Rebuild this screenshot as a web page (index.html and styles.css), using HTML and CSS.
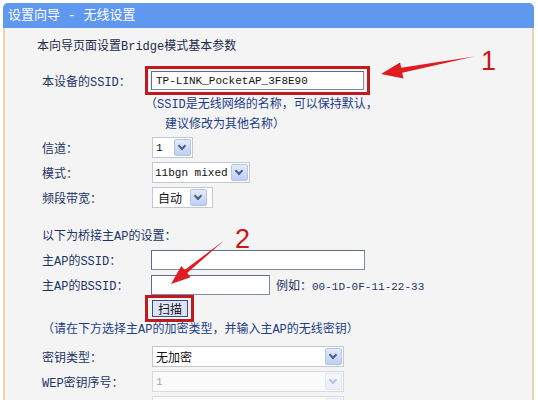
FILE: index.html
```html
<!DOCTYPE html>
<html lang="zh-CN">
<head>
<meta charset="utf-8">
<title>设置向导 - 无线设置</title>
<link rel="stylesheet" href="styles.css">
</head>
<body>
<div class="panel">
  <div class="header">设置向导 - 无线设置</div>
  <div class="content">
    <div class="intro">本向导页面设置Bridge模式基本参数</div>

    <div class="row row-ssid">
      <div class="label">本设备的SSID：</div>
      <div class="redbox redbox-input">
        <div class="input input-ssid"><span class="en">TP-LINK_PocketAP_3F8E90</span></div>
      </div>
    </div>
    <div class="hint">
      <div class="hint-line">（SSID是无线网络的名称，可以保持默认，</div>
      <div class="hint-line hint-indent">建议修改为其他名称）</div>
    </div>

    <div class="row">
      <div class="label">信道：</div>
      <div class="select w-channel"><span class="select-text en">1</span><span class="select-btn"></span></div>
    </div>
    <div class="row">
      <div class="label">模式：</div>
      <div class="select w-mode"><span class="select-text en">11bgn mixed</span><span class="select-btn"></span></div>
    </div>
    <div class="row">
      <div class="label">频段带宽：</div>
      <div class="select w-band"><span class="select-text">自动</span><span class="select-btn"></span></div>
    </div>

    <div class="row section">
      <div class="label label-wide">以下为桥接主AP的设置：</div>
    </div>
    <div class="row">
      <div class="label">主AP的SSID：</div>
      <div class="input input-master"></div>
    </div>
    <div class="row">
      <div class="label">主AP的BSSID：</div>
      <div class="input input-bssid"></div>
      <div class="example">例如：<span class="en">00-1D-0F-11-22-33</span></div>
    </div>
    <div class="row row-scan">
      <div class="label"></div>
      <div class="redbox redbox-btn"><span class="button">扫描</span></div>
    </div>
    <div class="hint2">（请在下方选择主AP的加密类型，并输入主AP的无线密钥）</div>

    <div class="row row-key">
      <div class="label">密钥类型：</div>
      <div class="select w-key"><span class="select-text">无加密</span><span class="select-btn"></span></div>
    </div>
    <div class="row">
      <div class="label">WEP密钥序号：</div>
      <div class="select w-key disabled"><span class="select-text en">1</span><span class="select-btn"></span></div>
    </div>
    <div class="row">
      <div class="label"></div>
      <div class="select w-key disabled"><span class="select-text"></span><span class="select-btn"></span></div>
    </div>
  </div>
</div>

<svg class="annot" width="538" height="400" viewBox="0 0 538 400">
  <polygon class="arrow" points="381,74 400,62.5 401.2,67.8 474,56.5 402.2,72.8 403.5,78.5"/>
  <text class="num" x="481" y="70">1</text>
  <polygon class="arrow" points="171,284 181.3,266 184.6,270.1 224,240.5 187.2,273.1 190.6,277.3"/>
  <text class="num" x="235" y="248">2</text>
</svg>
</body>
</html>
```

FILE: styles.css
```css
html, body {
  margin: 0;
  padding: 0;
  background: #ffffff;
}

body {
  width: 538px;
  height: 400px;
  overflow: hidden;
  position: relative;
  font-family: "Liberation Mono", "Noto Sans CJK SC", monospace;
  font-size: 12px;
  color: #1b3466;
}

.panel {
  margin: 3px 4px 0 3px;
  width: 531px;
}

.header {
  height: 25px;
  line-height: 25px;
  background: #6097ef;
  border-radius: 5px 5px 0 0;
  color: #ffffff;
  font-size: 13px;
  padding-left: 5px;
}

.content {
  background: #f4f4f4;
  border-left: 2px solid #ecd3ab;
  border-right: 2px solid #ecd3ab;
  padding-left: 37px;
  height: 380px;
}

.en {
  font-family: "Liberation Mono", monospace;
  font-size: 11px;
}

.intro {
  margin: 0 0 0 -5px;
  padding-top: 10px;
  line-height: 18px;
  color: #1c2a48;
}

.row {
  display: flex;
  align-items: center;
  height: 25px;
}

.label {
  width: 109px;
  flex: none;
  white-space: nowrap;
}

.label-wide {
  width: auto;
}

.row-ssid {
  margin-top: 10px;
  height: 29px;
}

.redbox {
  border: 3px solid #c01a20;
  box-sizing: border-box;
}

.redbox-input {
  margin-left: -6px;
  padding: 2px 3px;
}

.input {
  box-sizing: border-box;
  height: 19px;
  background: #ffffff;
  border: 1px solid #7c8ea6;
  border-top-color: #5d6e86;
  border-left-color: #5d6e86;
  display: flex;
  align-items: center;
  padding-left: 4px;
  color: #111;
}

.input-ssid { width: 213px; }
.input-master { width: 214px; height: 20px; }
.input-bssid { width: 119px; height: 20px; }

.hint {
  padding-left: 103px;
  color: #1c3d86;
}

.hint-line {
  line-height: 20px;
}

.hint-indent {
  padding-left: 20px;
}

.select {
  box-sizing: border-box;
  height: 21px;
  display: flex;
  align-items: center;
  background: #ffffff;
  border: 1px solid #c3c9d2;
  color: #111;
  margin-left: 1px;
}

.select-text {
  flex: 1;
  padding-left: 3px;
  white-space: nowrap;
  overflow: hidden;
}

.select-btn {
  width: 15px;
  height: 15px;
  margin-right: 1px;
  border: 1px solid #b3c4e6;
  border-radius: 2px;
  background: linear-gradient(#e3ebfc, #bccff6);
  position: relative;
  flex: none;
}

.select-btn::after {
  content: "";
  position: absolute;
  left: 4px;
  top: 3px;
  width: 4px;
  height: 4px;
  border-right: 2px solid #4e5f80;
  border-bottom: 2px solid #4e5f80;
  transform: rotate(45deg);
}

.w-channel { width: 41px; }
.w-mode { width: 98px; }
.w-band { width: 61px; }
.w-key { width: 192px; }

.w-mode .select-text { padding-left: 2px; }
.w-band .select-btn { margin-right: 5px; }
.w-band .select-text { padding-left: 5px; }

.disabled .select-text { color: #a8a8a8; }
.disabled { border-color: #d6d9de; background: #fafafa; }
.disabled .select-btn {
  border-color: #dfe6f4;
  background: linear-gradient(#f5f8fe, #e8eefb);
}
.disabled .select-btn::after {
  border-color: #b9c3d6;
}

.section {
  margin-top: 12px;
}

.example {
  margin-left: 6px;
  white-space: nowrap;
}

.row-scan {
  margin-top: -2px;
  height: 27px;
}

.redbox-btn {
  margin-left: -6px;
  padding: 2px 3px 2px 4px;
}

.button {
  display: flex;
  align-items: center;
  justify-content: center;
  box-sizing: border-box;
  width: 36px;
  height: 17px;
  background: #dde5f7;
  border: 1px solid #364f85;
  color: #111;
}

.hint2 {
  line-height: 16px;
  color: #1c3d86;
  margin-top: 0;
}

.row-key {
  margin-top: 6px;
}

.annot {
  position: absolute;
  left: 0;
  top: 0;
  pointer-events: none;
}

.arrow {
  fill: #df1c22;
}

.num {
  fill: #c8171d;
  font-family: "Liberation Sans", sans-serif;
  font-size: 27px;
}
```
